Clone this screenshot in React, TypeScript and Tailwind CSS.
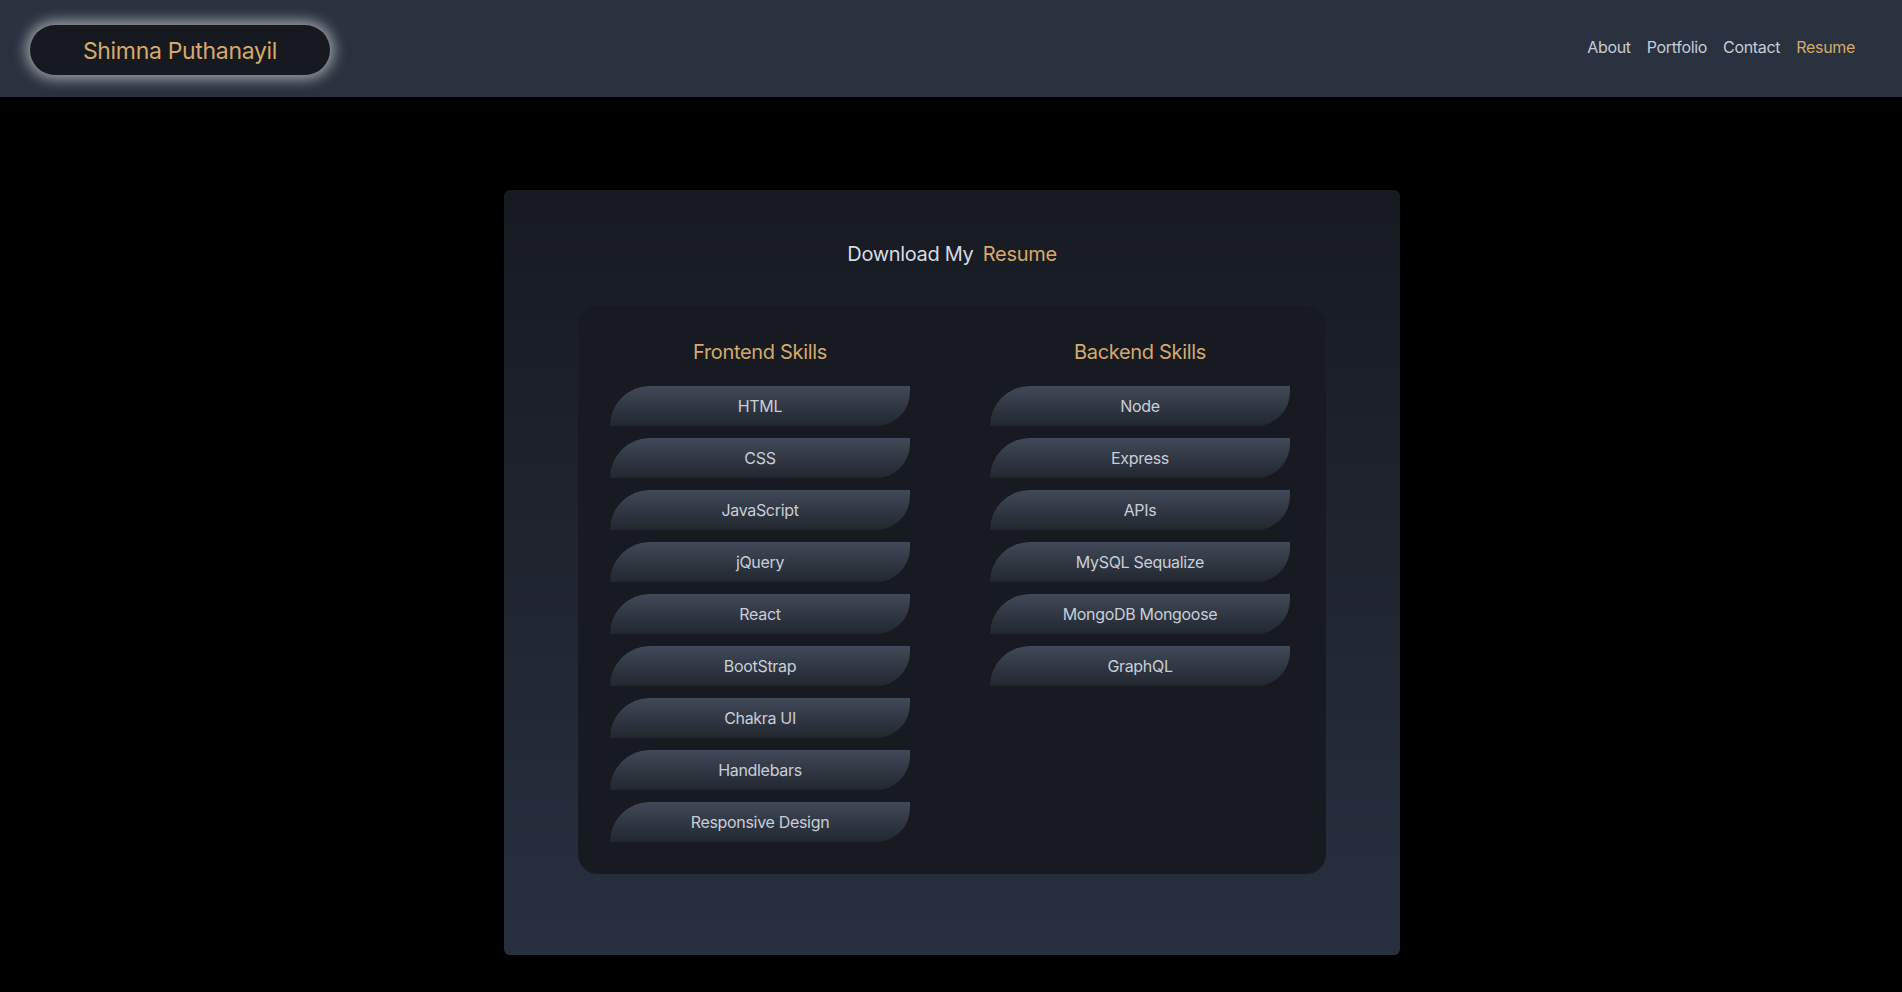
import React from 'react';

const frontend = ['HTML', 'CSS', 'JavaScript', 'jQuery', 'React', 'BootStrap', 'Chakra UI', 'Handlebars', 'Responsive Design'];
const backend = ['Node', 'Express', 'APIs', 'MySQL Sequalize', 'MongoDB Mongoose', 'GraphQL'];

function SkillColumn({ title, skills }: { title: string; skills: string[] }) {
  return (
    <div className="w-[300px] flex flex-col items-center">
      <h3 className="text-xl leading-7 text-[#d6aa6a] mb-5">{title}</h3>
      <ul className="w-full flex flex-col gap-3">
        {skills.map((skill) => (
          <li
            key={skill}
            className="h-10 flex items-center justify-center text-base text-[#c8ced8] bg-gradient-to-b from-[#414a5a] to-[#22272f] rounded-tl-[40px] rounded-br-[34px]"
          >
            {skill}
          </li>
        ))}
      </ul>
    </div>
  );
}

export default function App() {
  return (
    <div className="min-h-[992px] bg-black font-['Inter','Liberation_Sans',sans-serif] tracking-[-0.02em]">
      {/* header */}
      <header className="h-[97px] bg-[#2a323f] flex items-center justify-between pl-[30px] pr-[47px]">
        <div className="mt-[3px] w-[300px] h-[50px] rounded-full bg-[#16191f] shadow-[0_0_14px_4px_rgba(255,255,255,0.55)] flex items-center justify-center">
          <span className="pt-[2px] text-[23px] text-[#d6aa6a]">Shimna Puthanayil</span>
        </div>
        <nav className="flex items-center gap-4 text-base text-[#c5ccd6] -mt-[3px]">
          <a>About</a>
          <a>Portfolio</a>
          <a>Contact</a>
          <a className="text-[#d6aa6a]">Resume</a>
        </nav>
      </header>

      {/* resume card */}
      <main className="pt-[93px] pb-[39px] pl-[2px]">
        <section className="w-[896px] mx-auto rounded-md bg-gradient-to-b from-[#171a21] to-[#283040] pt-12 pb-[81px]">
          <h2 className="pt-[2px] text-xl leading-7 text-center text-[#d7dbe2]">
            Download My <span className="ml-1 text-[#d6aa6a]">Resume</span>
          </h2>
          <div className="w-[748px] mx-auto mt-[38px] rounded-[20px] bg-[#171a21] py-8 flex justify-center gap-20 pr-1">
            <SkillColumn title="Frontend Skills" skills={frontend} />
            <SkillColumn title="Backend Skills" skills={backend} />
          </div>
        </section>
      </main>
    </div>
  );
}
